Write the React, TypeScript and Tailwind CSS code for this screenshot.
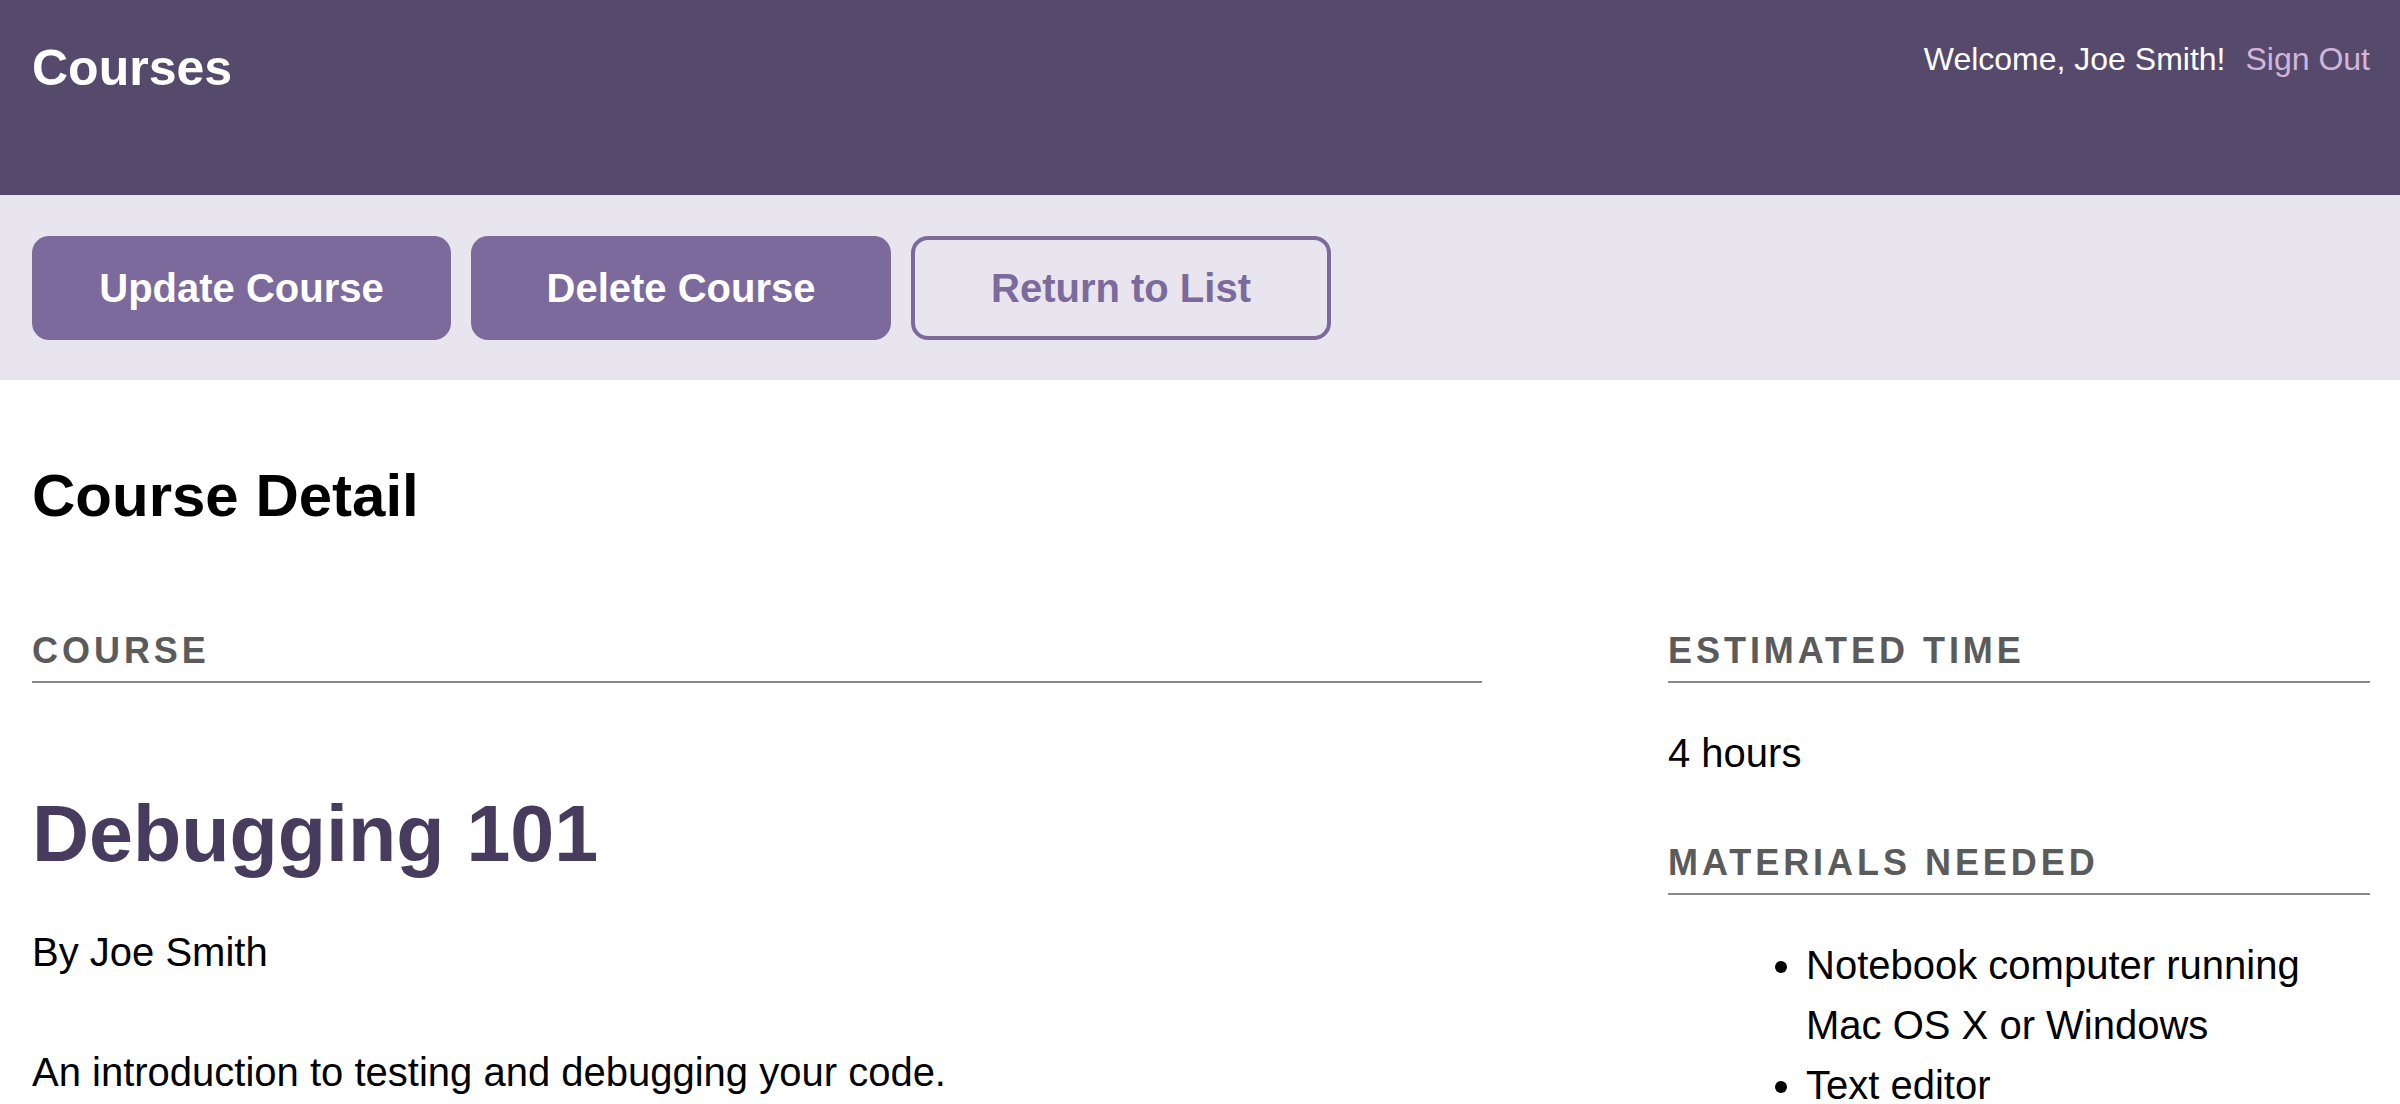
const materials = ['Notebook computer running Mac OS X or Windows', 'Text editor'];

function SectionLabel({ children }: { children: string }) {
  return (
    <h3 className="text-[36px] leading-[1.2] font-bold uppercase tracking-[0.11em] text-[#5b5b5b] pb-[9px] border-b-2 border-[#8a8a8a]">
      {children}
    </h3>
  );
}

export default function App() {
  return (
    <div className="min-h-[1104px] bg-white text-black font-['Liberation_Sans',Arial,sans-serif]">
      {/* Top header */}
      <header className="h-[195px] bg-[#554a6c] pl-8 pr-[30px] pt-[38px] flex justify-between items-start">
        <h1 className="text-[50px] leading-[1.2] font-bold text-white">Courses</h1>
        <nav className="flex items-start gap-5 pt-[2px] text-[32px] leading-[1.2]">
          <span className="text-white">Welcome, Joe Smith!</span>
          <a className="text-[#d4b5da]" href="#">Sign Out</a>
        </nav>
      </header>

      {/* Action bar */}
      <div className="h-[185px] bg-[#e8e5ef] px-8 flex items-center gap-5">
        <button className="w-[419px] h-[104px] rounded-[17px] bg-[#7b6a9b] text-white text-[40px] font-bold">
          Update Course
        </button>
        <button className="w-[420px] h-[104px] rounded-[17px] bg-[#7b6a9b] text-white text-[40px] font-bold">
          Delete Course
        </button>
        <button className="w-[420px] h-[104px] rounded-[17px] border-4 border-[#7b6a9b] text-[#7b6a9b] text-[40px] font-bold">
          Return to List
        </button>
      </div>

      {/* Course detail */}
      <main className="pl-8 pr-[30px] pt-20">
        <h2 className="text-[60px] leading-[1.2] font-bold">Course Detail</h2>

        <div className="mt-[97px] flex justify-between items-start">
          <section className="w-[1450px]">
            <SectionLabel>Course</SectionLabel>
            <h4 className="mt-[104px] text-[79px] leading-[1.2] font-bold text-[#473b5e]">Debugging 101</h4>
            <p className="mt-[40px] text-[40px] leading-[1.5]">By Joe Smith</p>
            <p className="mt-[60px] text-[40px] leading-[1.5]">An introduction to testing and debugging your code.</p>
          </section>

          <aside className="w-[702px]">
            <SectionLabel>Estimated Time</SectionLabel>
            <p className="mt-10 text-[40px] leading-[1.5]">4 hours</p>
            <div className="mt-[58px]">
              <SectionLabel>Materials Needed</SectionLabel>
            </div>
            <ul className="mt-10 pl-[138px] list-disc text-[40px] leading-[1.5]">
              {materials.map(item => (
                <li key={item}>{item}</li>
              ))}
            </ul>
          </aside>
        </div>
      </main>
    </div>
  );
}
